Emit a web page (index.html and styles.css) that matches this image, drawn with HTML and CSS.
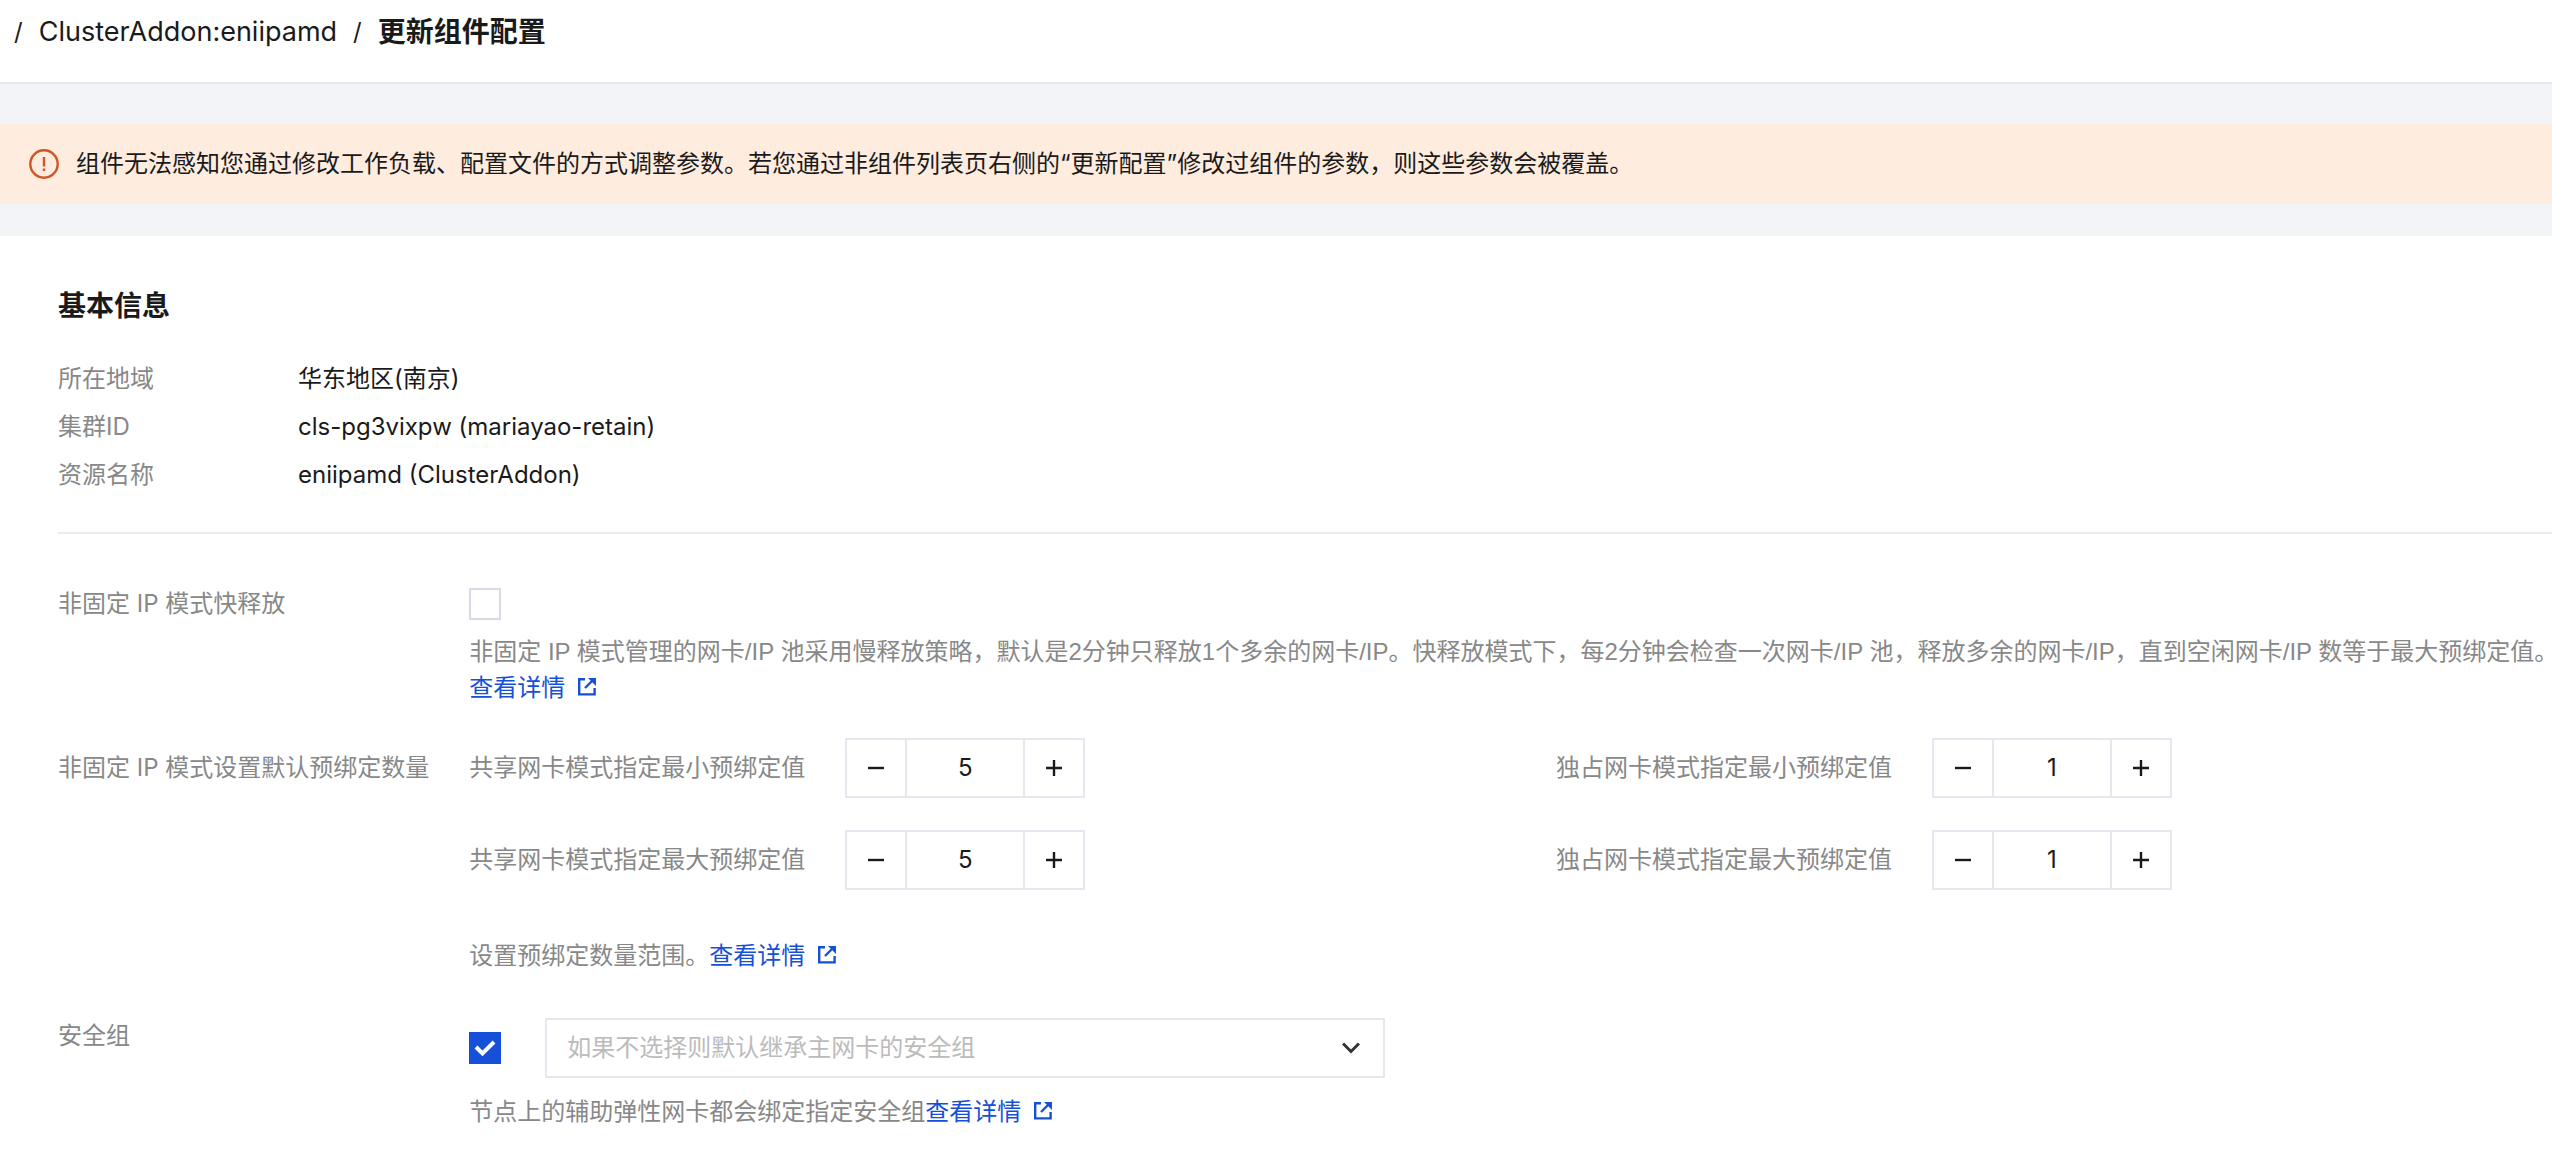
FILE: index.html
```html
<!DOCTYPE html>
<html lang="zh-CN">
<head>
<meta charset="utf-8">
<title>更新组件配置</title>
<link rel="stylesheet" href="styles.css">
</head>
<body>
<svg class="sprite" aria-hidden="true">
  <symbol id="icon-external" viewBox="0 0 18 18">
    <path d="M7 1.2H1.2V16.4H16.6V10" fill="none" stroke="currentColor" stroke-width="2.4"/>
    <path d="M7 10L14.5 2.5" fill="none" stroke="currentColor" stroke-width="2.4"/>
    <path d="M10 0H18V8Z" fill="currentColor"/>
  </symbol>
  <symbol id="icon-minus" viewBox="0 0 16 16">
    <path d="M0 8H16" fill="none" stroke="currentColor" stroke-width="2.4"/>
  </symbol>
  <symbol id="icon-plus" viewBox="0 0 16 16">
    <path d="M0 8H16M8 0V16" fill="none" stroke="currentColor" stroke-width="2.4"/>
  </symbol>
</svg>

<header class="page-header">
  <nav class="breadcrumb" aria-label="面包屑">
    <span class="breadcrumb-sep">/</span>
    <a class="breadcrumb-link" href="#addon">ClusterAddon:eniipamd</a>
    <span class="breadcrumb-sep">/</span>
    <h1 class="breadcrumb-current">更新组件配置</h1>
  </nav>
</header>

<div class="alert" role="alert">
  <svg class="alert-icon" viewBox="0 0 30 30" aria-hidden="true">
    <circle cx="15" cy="15" r="13.7" fill="none" stroke="currentColor" stroke-width="2.4"/>
    <path d="M15 8V17.5M15 19.5V22" fill="none" stroke="currentColor" stroke-width="2.4"/>
  </svg>
  <p class="alert-text">组件无法感知您通过修改工作负载、配置文件的方式调整参数。若您通过非组件列表页右侧的“更新配置”修改过组件的参数，则这些参数会被覆盖。</p>
</div>

<main class="card">
  <section class="basic">
    <h2 class="section-title">基本信息</h2>
    <dl class="info">
      <dt>所在地域</dt><dd>华东地区(南京)</dd>
      <dt>集群ID</dt><dd>cls-pg3vixpw (mariayao-retain)</dd>
      <dt>资源名称</dt><dd>eniipamd (ClusterAddon)</dd>
    </dl>
  </section>

  <form class="form">
    <label class="form-label form-label-short" for="fast-release">非固定 IP 模式快释放</label>
    <div class="form-field release-field">
      <span class="check"><input class="check-input" type="checkbox" id="fast-release"></span>
      <p class="help release-help">非固定 IP 模式管理的网卡/IP 池采用慢释放策略，默认是2分钟只释放1个多余的网卡/IP。快释放模式下，每2分钟会检查一次网卡/IP 池，释放多余的网卡/IP，直到空闲网卡/IP 数等于最大预绑定值。<br><a class="link" href="#release">查看详情<svg class="link-icon"><use href="#icon-external"/></svg></a></p>
    </div>

    <span class="form-label form-label-tall">非固定 IP 模式设置默认预绑定数量</span>
    <div class="form-field">
      <div class="limits">
        <div class="limit">
          <label for="shared-min">共享网卡模式指定最小预绑定值</label>
          <div class="stepper">
            <button type="button" class="stepper-btn" aria-label="减少"><svg class="stepper-icon"><use href="#icon-minus"/></svg></button>
            <input class="stepper-input" id="shared-min" type="text" inputmode="numeric" value="5">
            <button type="button" class="stepper-btn" aria-label="增加"><svg class="stepper-icon"><use href="#icon-plus"/></svg></button>
          </div>
        </div>
        <div class="limit">
          <label for="exclusive-min">独占网卡模式指定最小预绑定值</label>
          <div class="stepper">
            <button type="button" class="stepper-btn" aria-label="减少"><svg class="stepper-icon"><use href="#icon-minus"/></svg></button>
            <input class="stepper-input" id="exclusive-min" type="text" inputmode="numeric" value="1">
            <button type="button" class="stepper-btn" aria-label="增加"><svg class="stepper-icon"><use href="#icon-plus"/></svg></button>
          </div>
        </div>
        <div class="limit">
          <label for="shared-max">共享网卡模式指定最大预绑定值</label>
          <div class="stepper">
            <button type="button" class="stepper-btn" aria-label="减少"><svg class="stepper-icon"><use href="#icon-minus"/></svg></button>
            <input class="stepper-input" id="shared-max" type="text" inputmode="numeric" value="5">
            <button type="button" class="stepper-btn" aria-label="增加"><svg class="stepper-icon"><use href="#icon-plus"/></svg></button>
          </div>
        </div>
        <div class="limit">
          <label for="exclusive-max">独占网卡模式指定最大预绑定值</label>
          <div class="stepper">
            <button type="button" class="stepper-btn" aria-label="减少"><svg class="stepper-icon"><use href="#icon-minus"/></svg></button>
            <input class="stepper-input" id="exclusive-max" type="text" inputmode="numeric" value="1">
            <button type="button" class="stepper-btn" aria-label="增加"><svg class="stepper-icon"><use href="#icon-plus"/></svg></button>
          </div>
        </div>
      </div>
      <p class="help limits-help">设置预绑定数量范围。<a class="link" href="#limits">查看详情<svg class="link-icon"><use href="#icon-external"/></svg></a></p>
    </div>

    <label class="form-label" for="use-group">安全组</label>
    <div class="form-field">
      <div class="group-row">
        <span class="check">
          <input class="check-input" type="checkbox" id="use-group" checked>
          <svg class="check-mark" viewBox="0 0 32 32" aria-hidden="true"><path d="M7 15L13.5 21.5L25 10" fill="none" stroke="currentColor" stroke-width="4"/></svg>
        </span>
        <div class="select">
          <select class="select-input" aria-label="安全组">
            <option>如果不选择则默认继承主网卡的安全组</option>
          </select>
          <svg class="select-arrow" viewBox="0 0 18 12" aria-hidden="true"><path d="M1 1.5L9 9.5L17 1.5" fill="none" stroke="currentColor" stroke-width="3"/></svg>
        </div>
      </div>
      <p class="help group-help">节点上的辅助弹性网卡都会绑定指定安全组<a class="link" href="#group">查看详情<svg class="link-icon"><use href="#icon-external"/></svg></a></p>
    </div>
  </form>
</main>
</body>
</html>
```

FILE: styles.css
```css
* {
  box-sizing: border-box;
}

body {
  margin: 0;
  background: #f2f4f8;
  color: #1a1a1a;
  font-family: Inter, "Noto Sans CJK SC", sans-serif;
  font-size: 24px;
  line-height: 36px;
  overflow-x: hidden;
}

h1, h2, p, dl, dd {
  margin: 0;
}

input, select, button {
  font: inherit;
  color: inherit;
}

.sprite {
  display: none;
}

.page-header {
  background: #fff;
  border-bottom: 2px solid #e5e8f0;
  padding: 12px 14px 30px;
}

.breadcrumb {
  display: flex;
  align-items: center;
  gap: 16px;
  line-height: 40px;
}

.breadcrumb-link {
  color: inherit;
  font-size: 27px;
  text-decoration: none;
}

.breadcrumb-current,
.section-title {
  font-size: 28px;
  font-weight: 700;
  line-height: 40px;
}

.alert {
  display: flex;
  align-items: center;
  gap: 17px;
  margin: 40px 0 32px;
  padding: 22px 29px;
  background: #feecdf;
}

.alert-icon {
  flex: none;
  width: 30px;
  height: 30px;
  color: #cf5526;
}

.card {
  min-height: calc(100vh - 236px);
  padding: 50px 0 24px 58px;
  background: #fff;
}

.basic {
  padding-bottom: 33px;
  border-bottom: 2px solid #e9ecf1;
}

.section-title {
  margin-bottom: 29px;
}

.info {
  display: grid;
  grid-template-columns: 240px 1fr;
  line-height: 48px;
}

.info dt,
.form {
  color: #888;
}

.form {
  display: grid;
  grid-template-columns: auto 1fr;
  column-gap: 40px;
  row-gap: 32px;
  padding-top: 54px;
}

.form-field {
  min-width: 0;
}

.form-label-short {
  line-height: 32px;
}

.form-label-tall {
  line-height: 60px;
}

.check {
  display: grid;
  width: 32px;
  height: 32px;
}

.check-input {
  grid-area: 1 / 1;
  width: 32px;
  height: 32px;
  margin: 0;
  appearance: none;
  border: 2px solid #d5dae3;
  background: #fff;
}

.check-input:checked {
  border-color: #1650d8;
  background: #1650d8;
}

.check-mark {
  grid-area: 1 / 1;
  width: 32px;
  height: 32px;
  color: #fff;
  pointer-events: none;
}

.help {
  font-family: "Liberation Sans", "Noto Sans CJK SC", sans-serif;
  white-space: nowrap;
}

.release-help {
  margin-top: 14px;
}

.link {
  color: #1650d8;
  text-decoration: none;
}

.link-icon {
  width: 18px;
  height: 18px;
  margin-left: 13px;
}

.limits {
  display: grid;
  grid-template-columns: 12fr 11fr;
  row-gap: 32px;
}

.limit {
  display: flex;
  align-items: center;
  gap: 40px;
}

.stepper {
  display: flex;
  width: 240px;
  height: 60px;
  border: 2px solid #e5e8ef;
  color: #1a1a1a;
}

.stepper-btn {
  display: grid;
  flex: none;
  place-items: center;
  width: 58px;
  padding: 0;
  border: 0;
  background: #fff;
}

.stepper-icon {
  width: 16px;
  height: 16px;
}

.stepper-input {
  flex: 1;
  min-width: 0;
  padding: 0;
  border: solid #e5e8ef;
  border-width: 0 2px;
  text-align: center;
}

.limits-help {
  margin: 48px 0 12px;
}

.group-row {
  display: flex;
  align-items: center;
  gap: 44px;
}

.select {
  display: grid;
  align-items: center;
  width: 840px;
}

.select-input {
  grid-area: 1 / 1;
  width: 100%;
  height: 60px;
  padding: 0 20px;
  appearance: none;
  border: 2px solid #e5e8ef;
  border-radius: 0;
  background: #fff;
  color: #bbb;
}

.select-arrow {
  grid-area: 1 / 1;
  justify-self: end;
  width: 18px;
  height: 12px;
  margin-right: 25px;
  color: #333;
  pointer-events: none;
}

.group-help {
  margin-top: 16px;
}
```
